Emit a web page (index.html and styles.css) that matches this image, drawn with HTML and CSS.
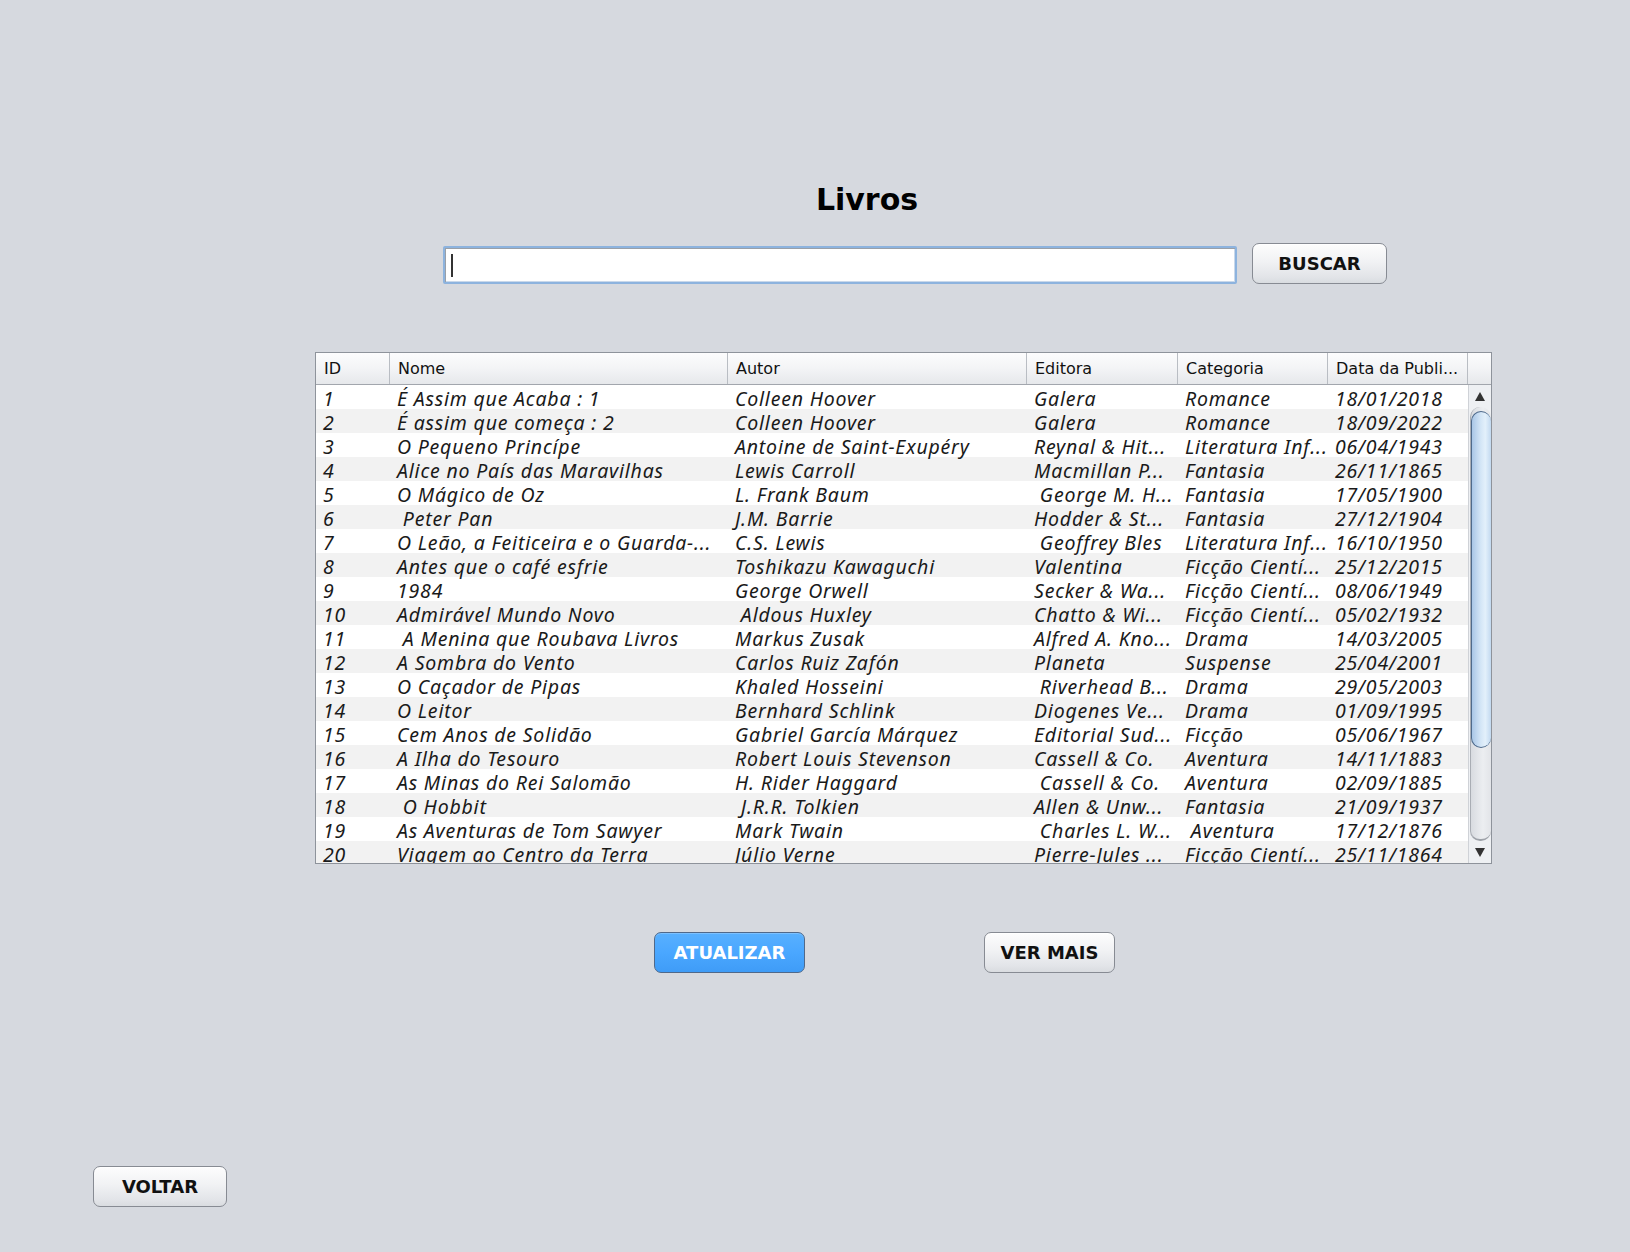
FILE: index.html
```html
<!DOCTYPE html>
<html lang="pt">
<head>
<meta charset="utf-8">
<title>Livros</title>
<link rel="stylesheet" href="styles.css">
</head>
<body>
<div class="app">
  <h1 class="title">Livros</h1>

  <div class="search-row">
    <div class="search-field"><span class="caret"></span></div>
    <button class="btn btn-search">BUSCAR</button>
  </div>

  <div class="table">
    <div class="thead">
      <div class="th">ID</div>
      <div class="th">Nome</div>
      <div class="th">Autor</div>
      <div class="th">Editora</div>
      <div class="th">Categoria</div>
      <div class="th">Data da Publi...</div>
      <div class="th th-corner"></div>
    </div>
    <div class="tbody">
      <div class="rows">
        <div class="tr"><div class="td">1</div><div class="td">É Assim que Acaba : 1</div><div class="td">Colleen Hoover</div><div class="td">Galera</div><div class="td">Romance</div><div class="td">18/01/2018</div></div>
        <div class="tr"><div class="td">2</div><div class="td">É assim que começa : 2</div><div class="td">Colleen Hoover</div><div class="td">Galera</div><div class="td">Romance</div><div class="td">18/09/2022</div></div>
        <div class="tr"><div class="td">3</div><div class="td">O Pequeno Princípe</div><div class="td">Antoine de Saint-Exupéry</div><div class="td">Reynal &amp; Hit...</div><div class="td">Literatura Inf...</div><div class="td">06/04/1943</div></div>
        <div class="tr"><div class="td">4</div><div class="td">Alice no País das Maravilhas</div><div class="td">Lewis Carroll</div><div class="td">Macmillan P...</div><div class="td">Fantasia</div><div class="td">26/11/1865</div></div>
        <div class="tr"><div class="td">5</div><div class="td">O Mágico de Oz</div><div class="td">L. Frank Baum</div><div class="td"> George M. H...</div><div class="td">Fantasia</div><div class="td">17/05/1900</div></div>
        <div class="tr"><div class="td">6</div><div class="td"> Peter Pan</div><div class="td">J.M. Barrie</div><div class="td">Hodder &amp; St...</div><div class="td">Fantasia</div><div class="td">27/12/1904</div></div>
        <div class="tr"><div class="td">7</div><div class="td">O Leão, a Feiticeira e o Guarda-...</div><div class="td">C.S. Lewis</div><div class="td"> Geoffrey Bles</div><div class="td">Literatura Inf...</div><div class="td">16/10/1950</div></div>
        <div class="tr"><div class="td">8</div><div class="td">Antes que o café esfrie</div><div class="td">Toshikazu Kawaguchi</div><div class="td">Valentina</div><div class="td">Ficção Cientí...</div><div class="td">25/12/2015</div></div>
        <div class="tr"><div class="td">9</div><div class="td">1984</div><div class="td">George Orwell</div><div class="td">Secker &amp; Wa...</div><div class="td">Ficção Cientí...</div><div class="td">08/06/1949</div></div>
        <div class="tr"><div class="td">10</div><div class="td">Admirável Mundo Novo</div><div class="td"> Aldous Huxley</div><div class="td">Chatto &amp; Wi...</div><div class="td">Ficção Cientí...</div><div class="td">05/02/1932</div></div>
        <div class="tr"><div class="td">11</div><div class="td"> A Menina que Roubava Livros</div><div class="td">Markus Zusak</div><div class="td">Alfred A. Kno...</div><div class="td">Drama</div><div class="td">14/03/2005</div></div>
        <div class="tr"><div class="td">12</div><div class="td">A Sombra do Vento</div><div class="td">Carlos Ruiz Zafón</div><div class="td">Planeta</div><div class="td">Suspense</div><div class="td">25/04/2001</div></div>
        <div class="tr"><div class="td">13</div><div class="td">O Caçador de Pipas</div><div class="td">Khaled Hosseini</div><div class="td"> Riverhead B...</div><div class="td">Drama</div><div class="td">29/05/2003</div></div>
        <div class="tr"><div class="td">14</div><div class="td">O Leitor</div><div class="td">Bernhard Schlink</div><div class="td">Diogenes Ve...</div><div class="td">Drama</div><div class="td">01/09/1995</div></div>
        <div class="tr"><div class="td">15</div><div class="td">Cem Anos de Solidão</div><div class="td">Gabriel García Márquez</div><div class="td">Editorial Sud...</div><div class="td">Ficção</div><div class="td">05/06/1967</div></div>
        <div class="tr"><div class="td">16</div><div class="td">A Ilha do Tesouro</div><div class="td">Robert Louis Stevenson</div><div class="td">Cassell &amp; Co.</div><div class="td">Aventura</div><div class="td">14/11/1883</div></div>
        <div class="tr"><div class="td">17</div><div class="td">As Minas do Rei Salomão</div><div class="td">H. Rider Haggard</div><div class="td"> Cassell &amp; Co.</div><div class="td">Aventura</div><div class="td">02/09/1885</div></div>
        <div class="tr"><div class="td">18</div><div class="td"> O Hobbit</div><div class="td"> J.R.R. Tolkien</div><div class="td">Allen &amp; Unw...</div><div class="td">Fantasia</div><div class="td">21/09/1937</div></div>
        <div class="tr"><div class="td">19</div><div class="td">As Aventuras de Tom Sawyer</div><div class="td">Mark Twain</div><div class="td"> Charles L. W...</div><div class="td"> Aventura</div><div class="td">17/12/1876</div></div>
        <div class="tr"><div class="td">20</div><div class="td">Viagem ao Centro da Terra</div><div class="td">Júlio Verne</div><div class="td">Pierre-Jules ...</div><div class="td">Ficção Cientí...</div><div class="td">25/11/1864</div></div>
      </div>
      <div class="vscroll">
        <div class="arrow"><svg width="10" height="9" viewBox="0 0 10 9"><polygon points="5,0 10,9 0,9" fill="#333"/></svg></div>
        <div class="track"><div class="thumb"></div></div>
        <div class="arrow"><svg width="10" height="9" viewBox="0 0 10 9"><polygon points="0,0 10,0 5,9" fill="#333"/></svg></div>
      </div>
    </div>
  </div>

  <div class="actions">
    <button class="btn btn-primary btn-update">ATUALIZAR</button>
    <button class="btn btn-more">VER MAIS</button>
  </div>

  <div class="footer">
    <button class="btn btn-back">VOLTAR</button>
  </div>
</div>
</body>
</html>
```

FILE: styles.css
```css
* { box-sizing: border-box; }

html, body {
  margin: 0;
  padding: 0;
}

body {
  background: #d6d9df;
  width: 1630px;
  height: 1252px;
  overflow: hidden;
  font-family: "DejaVu Sans", sans-serif;
  color: #000;
}

.app {
  display: flex;
  flex-direction: column;
  align-items: flex-start;
  padding-top: 182px;
}

.title {
  margin: 0 0 0 667px;
  width: 400px;
  text-align: center;
  font-family: "DejaVu Sans", sans-serif;
  font-weight: bold;
  font-size: 30px;
  line-height: 36px;
}

.search-row {
  margin: 25px 0 0 443px;
  display: flex;
  align-items: flex-end;
  gap: 15px;
}

.search-field {
  width: 794px;
  height: 38px;
  background: #fff;
  border: 2px solid #8db3de;
  border-radius: 2px;
  box-shadow: inset 1px 1px 0 #9aa0a8, inset 0 0 0 1px #c9d8ea;
  display: flex;
  align-items: center;
  padding-left: 6px;
}

.caret {
  display: block;
  width: 2px;
  height: 23px;
  background: #333;
}

.btn {
  font-family: "DejaVu Sans", sans-serif;
  font-weight: bold;
  font-size: 18px;
  color: #111;
  height: 41px;
  border: 1px solid #878b93;
  border-radius: 7px;
  background: linear-gradient(#fdfdfd 0%, #f1f2f4 45%, #e2e4e8 85%, #d9dce0 100%);
  box-shadow: inset 0 1px 0 #fff;
  padding: 0;
  margin: 0;
  cursor: default;
}

.btn-search { width: 135px; }

.btn-primary {
  color: #fff;
  border-color: #50698a;
  background: linear-gradient(#58b0ff 0%, #4aa7ff 50%, #3f9cf7 100%);
  box-shadow: inset 0 1px 0 #7cc1ff;
}

.table {
  margin: 68px 0 0 315px;
  width: 1177px;
  border: 1px solid #8e939b;
  background: #fff;
  display: flex;
  flex-direction: column;
}

.thead {
  display: grid;
  grid-template-columns: 74px 338px 299px 151px 150px 140px 23px;
  height: 32px;
  border-bottom: 1px solid #a2a6ad;
  background: linear-gradient(#fcfcfd 0%, #f3f4f6 50%, #e6e8eb 100%);
}

.th {
  font-family: "DejaVu Sans", sans-serif;
  font-size: 16px;
  line-height: 31px;
  padding-left: 8px;
  border-right: 1px solid #b9bdc3;
  white-space: nowrap;
  color: #111;
}

.th-corner { border-right: none; }

.tbody {
  display: flex;
  height: 478px;
  overflow: hidden;
}

.rows {
  width: 1152px;
  overflow: hidden;
}

.tr {
  display: grid;
  grid-template-columns: 74px 338px 299px 151px 150px 140px;
  height: 24px;
  background: #fff;
}

.tr:nth-child(even) { background: #f2f2f2; }

.td {
  font-family: "Noto Sans", "Open Sans", sans-serif;
  font-style: italic;
  font-size: 19.5px;
  letter-spacing: 0.8px;
  line-height: 24px;
  height: 24px;
  padding: 2px 0 0 7px;
  white-space: pre;
  color: #1a1a1a;
}

.vscroll {
  width: 23px;
  display: flex;
  flex-direction: column;
  background: #eef0f3;
  border-left: 1px solid #cfd2d7;
}

.arrow {
  height: 22px;
  display: flex;
  align-items: center;
  justify-content: center;
}

.track {
  flex: 1;
  margin: 0 0 0 1px;
  border-radius: 10px;
  background: linear-gradient(90deg, #d8dbe0, #eceef1 60%, #e2e4e8);
  border-left: 1px solid #a9adb4;
  border-bottom: 2px solid #9ea2a9;
  padding-top: 4px;
}

.thumb {
  height: 337px;
  border-radius: 11px;
  border: 1px solid #4f6b8c;
  border-right: none;
  background: linear-gradient(90deg, #a9c6e6 0%, #d3e5f6 45%, #e3f0fb 70%, #c2d9f0 100%);
}

.actions {
  margin: 68px 0 0 654px;
  display: flex;
  gap: 179px;
}

.btn-update { width: 151px; }
.btn-more { width: 131px; }

.footer {
  margin: 193px 0 0 93px;
}

.btn-back { width: 134px; }
```
